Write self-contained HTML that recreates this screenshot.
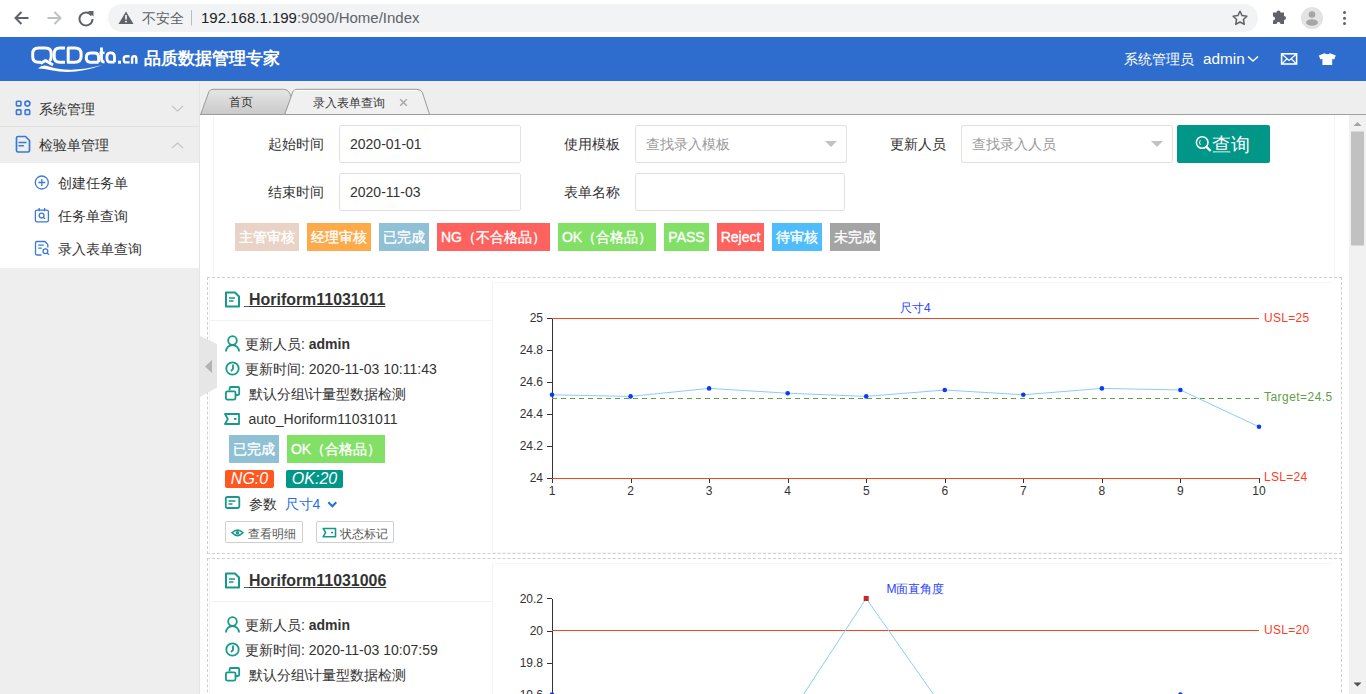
<!DOCTYPE html>
<html><head><meta charset="utf-8">
<style>
*{box-sizing:border-box}
html,body{margin:0;padding:0}
body{width:1366px;height:694px;overflow:hidden;position:relative;background:#fff;font-family:"Liberation Sans",sans-serif;color:#333;font-size:14px}
.a{position:absolute;white-space:nowrap}
#chrome{left:0;top:0;width:1366px;height:37px;background:#fff}
#pill{left:108px;top:4px;width:1150px;height:28px;border-radius:14px;background:#f1f3f4}
#header{left:0;top:37px;width:1366px;height:44px;background:#2e6dcd}
#sidebar{left:0;top:81px;width:200px;height:613px;background:#eeeeee;border-right:1px solid #e4e4e4}
#tabbar{left:200px;top:81px;width:1166px;height:34px;background:#eeeeee;border-bottom:1px solid #a0a0a0}
#content{left:200px;top:115px;width:1149px;height:579px;background:#fff}
#sb{left:1349px;top:115px;width:17px;height:579px;background:#f1f1f1}
.inp{border:1px solid #e2e2e2;border-radius:2px;background:#fff;height:38px}
.lbl{font-size:14px;color:#333}
.bdg{height:28px;line-height:28px;color:#fff;font-size:14px;text-align:center;-webkit-text-stroke:0.35px #fff}
.card{border:1px dashed #cfcfcf}
.ic{color:#1a9a8c}
.btn{border:1px solid #cfcfcf;border-radius:2px;height:22px;font-size:12px;color:#555;line-height:20px}
</style></head><body>
<div id="chrome" class="a"></div>
<div id="pill" class="a"></div>
<!-- nav icons -->
<svg class="a" style="left:0;top:0" width="440" height="37">
  <g fill="none" stroke="#5f6368" stroke-width="2">
    <path d="M28.5 18H15.5M21.5 12l-6 6 6 6"/>
  </g>
  <g fill="none" stroke="#bdc1c6" stroke-width="2">
    <path d="M47.5 18h13M54.5 12l6 6-6 6"/>
  </g>
  <g fill="none" stroke="#5f6368" stroke-width="2">
    <path d="M91.5 15.5A6.5 6.5 0 1 0 92.5 19"/>
  </g>
  <path d="M88 11h5.5v5.5z" fill="#5f6368"/>
  <path d="M126 11.5L133.5 24h-15z" fill="#5f6368"/>
  <rect x="125.2" y="15" width="1.6" height="4.5" fill="#fff"/>
  <rect x="125.2" y="20.8" width="1.6" height="1.6" fill="#fff"/>
  <rect x="191" y="10" width="1" height="15.5" fill="#bbb"/>
</svg>
<div class="a" style="left:142px;top:9px;font-size:14px;color:#5f6368;line-height:18px">不安全</div>
<div class="a" style="left:201px;top:8px;font-size:15px;color:#202124;line-height:20px">192.168.1.199<span style="color:#5f6368">:9090/Home/Index</span></div>
<svg class="a" style="left:1220px;top:0" width="146" height="37">
  <path d="M20 11.2l2.1 4.4 4.8.6-3.5 3.3.9 4.8-4.3-2.3-4.3 2.3.9-4.8-3.5-3.3 4.8-.6z" fill="none" stroke="#5f6368" stroke-width="1.5" stroke-linejoin="round"/>
  <path d="M53 12.5h3.5a2 2 0 0 1 4 0H64v3.5a2 2 0 0 1 0 4V24h-3.5a2 2 0 0 0-4 0H53v-3.5a2 2 0 0 0 0-4z" fill="#5f6368"/>
  <circle cx="92" cy="18" r="11" fill="#e3e3e3"/>
  <circle cx="92" cy="14.5" r="3.3" fill="#a6a6a6"/>
  <ellipse cx="92" cy="22.5" rx="6" ry="3.3" fill="#a6a6a6"/>
  <circle cx="124.5" cy="12.5" r="1.5" fill="#5f6368"/>
  <circle cx="124.5" cy="18.2" r="1.5" fill="#5f6368"/>
  <circle cx="124.5" cy="23.5" r="1.5" fill="#5f6368"/>
</svg>

<div id="header" class="a"></div>
<svg class="a" style="left:25px;top:40px" width="120" height="36" fill="none" stroke="#fff" stroke-width="3" stroke-linejoin="round">
<path d="M16 22.2H13.5Q7.7 22.2 7.7 16.5V13.8Q7.7 8.1 13.5 8.1H20.5Q26.2 8.1 26.2 13.8V16.5Q26.2 19.5 24.5 21"/>
<path d="M15.5 23.5L20.5 20.5L28 25"/>
<path d="M40 8.1H34.8Q29.2 8.1 29.2 13.5V16.8Q29.2 22.2 34.8 22.2H40"/>
<path d="M43.2 8.1H49.8Q56.1 8.1 56.1 14V16.3Q56.1 22.2 49.8 22.2H43.2Z"/>
<path d="M73.6 22.2V17Q73.6 12.9 69.5 12.9H65.5Q61.3 12.9 61.3 17.5Q61.3 22.2 65.5 22.2H73.6"/>
<path d="M76.5 7.5V18.5Q76.5 22.2 79.5 22.2" stroke-width="2.8"/><path d="M74.5 12.9H79.5" stroke-width="2.6"/>
<path d="M89.5 22.2V17Q89.5 12.9 86 12.9H85Q81.9 12.9 81.9 17.5Q81.9 22.2 85 22.2H89.5" stroke-width="2.8"/>
<rect x="93" y="20.7" width="3" height="3" fill="#fff" stroke="none"/>
<path d="M104.6 16.3H101.2Q98.8 16.3 98.8 18.8V19.9Q98.8 22.4 101.2 22.4H104.6" stroke-width="2.4"/>
<path d="M107.1 23.7V18.6Q107.1 16.3 109.1 16.3H109.4Q111.3 16.3 111.3 18.6V23.7" stroke-width="2.4"/>
<path d="M13 28.6Q17 24.5 21.5 25.8Q45 34 78 24.8Q50 35.5 26 30.2Q19 28.5 13 28.6Z" fill="#fff" stroke="none"/>
</svg>
<div class="a" style="left:144px;top:47.5px;font-size:16.7px;color:#fff;line-height:22px;font-weight:bold">品质数据管理专家</div>
<div class="a" style="left:1124px;top:49px;font-size:14px;color:#fff;line-height:20px">系统管理员</div>
<div class="a" style="left:1203px;top:49px;font-size:15.3px;color:#fff;line-height:20px">admin</div>
<svg class="a" style="left:1240px;top:40px" width="126" height="40">
  <path d="M8 16.5l5 4.5 5-4.5" fill="none" stroke="#fff" stroke-width="1.6"/>
  <rect x="41.6" y="13.8" width="15" height="10.2" fill="none" stroke="#fff" stroke-width="1.6"/>
  <path d="M42 14.2l7.1 6.2 7.1-6.2M42 23.6l4.8-4.6M56.2 23.6l-4.8-4.6" fill="none" stroke="#fff" stroke-width="1.2"/>
  <path d="M84.6 13.2L78.8 15.6 80.4 19.4 82.4 18.7V25H92.2V18.7L94.2 19.4 95.8 15.6 90 13.2Q87.3 15.2 84.6 13.2Z" fill="#fff"/>
</svg>

<div id="sidebar" class="a"></div>
<div class="a" style="left:0;top:126px;width:199px;height:1px;background:#e0e0e0"></div>
<div class="a" style="left:0;top:163px;width:199px;height:105px;background:#fff"></div>
<svg class="a" style="left:0;top:81px" width="199" height="190">
  <g fill="none" stroke="#3b78d8" stroke-width="1.8">
    <rect x="16.4" y="20.3" width="4.6" height="4.6" rx="0.8" stroke-width="1.6"/><circle cx="27.4" cy="22.6" r="2.5" stroke-width="1.6"/>
    <rect x="16.4" y="28.9" width="4.6" height="4.6" rx="0.8" stroke-width="1.6"/><rect x="25.1" y="28.9" width="4.6" height="4.6" rx="0.8" stroke-width="1.6"/>
    <path d="M18 55.5h7.5l4 4v10q0 1.5-1.5 1.5h-10q-1.5 0-1.5-1.5v-12.5q0-1.5 1.5-1.5z" stroke-width="1.7"/><path d="M18.5 61.5h8M18.5 64.8h5.3" stroke-width="1.6"/>
  </g>
  <g fill="none" stroke="#c4c4c4" stroke-width="1.2"><path d="M172 25l5.5 5 5.5-5"/><path d="M172 67l5.5-5 5.5 5"/></g>
  <g fill="none" stroke="#3b78d8" stroke-width="1.3">
    <circle cx="41.8" cy="101.5" r="6.5"/><path d="M41.8 98v7M38.3 101.5h7"/>
    <rect x="35.4" y="129.2" width="13" height="11.6" rx="1.6"/><path d="M39.2 127v3.2M44.6 127v3.2"/><circle cx="41.6" cy="134.6" r="2.4"/><path d="M43.3 136.3l1.6 1.6"/>
    <path d="M47.8 166.5V163.5l-3-3h-7.8q-1.5 0-1.5 1.5v10.5q0 1.5 1.5 1.5h4.5"/><path d="M38.3 164.2h5.5M38.3 167.2h3.5"/><circle cx="45.4" cy="170.2" r="2.4"/><path d="M47.1 171.9l1.8 1.8"/>
  </g>
</svg>
<div class="a lbl" style="left:39px;top:99px;line-height:20px">系统管理</div>
<div class="a lbl" style="left:39px;top:135px;line-height:20px">检验单管理</div>
<div class="a lbl" style="left:58px;top:173px;line-height:20px">创建任务单</div>
<div class="a lbl" style="left:58px;top:206px;line-height:20px">任务单查询</div>
<div class="a lbl" style="left:58px;top:239px;line-height:20px">录入表单查询</div>

<div id="tabbar" class="a"></div>
<svg class="a" style="left:196px;top:85px" width="240" height="31">
  <defs><linearGradient id="tg" x1="0" y1="0" x2="0" y2="1"><stop offset="0" stop-color="#e6e6e6"/><stop offset="1" stop-color="#c9c9c9"/></linearGradient></defs>
  <path d="M4.6 29.5L13 6.5Q14.3 4.3 17 4.3H87.5Q91.8 4.3 93.6 8L95.6 13L88.7 29.5Z" fill="url(#tg)" stroke="#9a9a9a" stroke-width="1"/>
  <path d="M88.7 29.5L96.8 6.8Q98 4.3 101 4.3H221Q225 4.3 226.4 7.5L233.6 29.5Z" fill="#f0f0f0" stroke="#9a9a9a" stroke-width="1"/><path d="M98.5 5.5H221" stroke="#fff" stroke-width="1"/>
</svg>
<div class="a" style="left:229px;top:94px;font-size:12px;color:#333;line-height:16px">首页</div>
<div class="a" style="left:313px;top:94.5px;font-size:12px;color:#333;line-height:16px">录入表单查询</div>
<svg class="a" style="left:399px;top:98px" width="10" height="10"><path d="M1.2 1.2l6.6 6.6M7.8 1.2l-6.6 6.6" stroke="#ababab" stroke-width="1.6"/></svg>

<div id="content" class="a"></div>
<div class="a" style="left:213px;top:115px;width:1px;height:161px;background:#f4f4f4"></div>
<div class="a" style="left:1334px;top:115px;width:1px;height:161px;background:#f4f4f4"></div>
<div id="sb" class="a"></div>
<svg class="a" style="left:1349px;top:115px" width="17" height="579">
  <path d="M4.5 11L8.5 7 12.5 11z" fill="#a3a3a3"/>
  <rect x="2" y="16.5" width="13" height="114" fill="#c1c1c1"/>
  <path d="M4.5 567.5L8.5 571.5 12.5 567.5z" fill="#505050"/>
</svg>

<!-- form -->
<div class="a lbl" style="left:268px;top:134px;line-height:20px">起始时间</div>
<div class="a inp" style="left:339px;top:125px;width:182px;"></div>
<div class="a" style="left:350px;top:134px;line-height:20px;font-size:14px;color:#333">2020-01-01</div>
<div class="a lbl" style="left:268px;top:182px;line-height:20px">结束时间</div>
<div class="a inp" style="left:339px;top:173px;width:182px;"></div>
<div class="a" style="left:350px;top:182px;line-height:20px;font-size:14px;color:#333">2020-11-03</div>

<div class="a lbl" style="left:564px;top:134px;line-height:20px">使用模板</div>
<div class="a inp" style="left:635px;top:125px;width:212px;"></div>
<div class="a" style="left:646px;top:134px;line-height:20px;font-size:14px;color:#999">查找录入模板</div>
<svg class="a" style="left:824px;top:140px" width="14" height="8"><path d="M1 1h12l-6 6z" fill="#c2c2c2"/></svg>
<div class="a lbl" style="left:564px;top:182px;line-height:20px">表单名称</div>
<div class="a inp" style="left:635px;top:173px;width:210px;"></div>

<div class="a lbl" style="left:890px;top:134px;line-height:20px">更新人员</div>
<div class="a inp" style="left:961px;top:125px;width:212px;"></div>
<div class="a" style="left:972px;top:134px;line-height:20px;font-size:14px;color:#999">查找录入人员</div>
<svg class="a" style="left:1150px;top:140px" width="14" height="8"><path d="M1 1h12l-6 6z" fill="#c2c2c2"/></svg>
<div class="a" style="left:1177px;top:125px;width:93px;height:38px;background:#009688;border-radius:2px"></div>
<svg class="a" style="left:1194px;top:134px" width="20" height="20"><circle cx="8.2" cy="8.5" r="5.8" fill="none" stroke="#fff" stroke-width="1.5"/><path d="M12.4 12.8l4.3 4.2" stroke="#fff" stroke-width="2.4"/><path d="M6.3 6.2q-1.6 2.3 0 4.6" fill="none" stroke="#fff" stroke-width="1"/></svg>
<div class="a" style="left:1212px;top:131.5px;font-size:18.5px;color:#fff;line-height:26px">查询</div>

<!-- legend badges -->
<div class="a bdg" style="left:235px;top:223px;width:64px;background:#e8d3c6">主管审核</div>
<div class="a bdg" style="left:307px;top:223px;width:64px;background:#fdaa4b">经理审核</div>
<div class="a bdg" style="left:379px;top:223px;width:50px;background:#90c0d6">已完成</div>
<div class="a bdg" style="left:437px;top:223px;width:113px;background:#fd625e">NG（不合格品）</div>
<div class="a bdg" style="left:558px;top:223px;width:98px;background:#83e066">OK（合格品）</div>
<div class="a bdg" style="left:664px;top:223px;width:45px;background:#83e066">PASS</div>
<div class="a bdg" style="left:717px;top:223px;width:47px;background:#fd625e">Reject</div>
<div class="a bdg" style="left:772px;top:223px;width:50px;background:#4fbcfb">待审核</div>
<div class="a bdg" style="left:830px;top:223px;width:50px;background:#a4a4a4">未完成</div>

<!-- card 1 -->
<div class="a card" style="left:207px;top:277px;width:1135px;height:277px"></div>
<div class="a card" style="left:207px;top:558px;width:1135px;height:200px"></div>
<div class="a" style="left:209px;top:278px;width:1px;height:274px;background:#f5f5f5"></div>
<div class="a" style="left:492px;top:282px;width:842px;height:271px;border:1px solid #f7f7f7;border-left-color:#f3f3f3;border-right-color:#fdfdfd;border-radius:2px"></div>
<div class="a" style="left:210px;top:320px;width:282px;height:1px;background:#f2f2f2"></div>
<svg class="a" style="left:224px;top:290.6px" width="18" height="18"><path d="M2 1.5h9l4 4V15.5h-13z" fill="none" stroke="#16998a" stroke-width="2" stroke-linejoin="round"/><path d="M5 7h6M5 10h4.5" stroke="#16998a" stroke-width="1.6"/></svg>
<div class="a" style="left:244px;top:306px;width:5px;height:1px;background:#3b5bdb"></div>
<div class="a" style="left:249px;top:291px;font-size:15.95px;font-weight:bold;color:#333;line-height:18px;text-decoration:underline;text-underline-offset:1px">Horiform11031011</div>
<svg class="a" style="left:222px;top:332.5px" width="22" height="150">
<g fill="none" stroke="#16998a" stroke-width="1.8">
<circle cx="10.5" cy="7.5" r="4.3"/><path d="M4 18.5a6.5 6.5 0 0 1 13 0"/>
<circle cx="10.5" cy="35.5" r="6.2"/><path d="M11 31.5v4.5l-2 2"/>
<rect x="3.9" y="58.4" width="9.6" height="8.2" rx="1.5"/><path d="M7.6 57.5v-2.3q0-1.2 1.2-1.2h7.2q1.2 0 1.2 1.2v5.6q0 1.2-1.2 1.2h-2.5"/>
</g>
<path d="M3 81h14v10h-14l2.8-5z" fill="none" stroke="#16998a" stroke-width="1.8" stroke-linejoin="round"/><rect x="12" y="85" width="2.5" height="1.8" fill="#16998a"/>
</svg>
<div class="a" style="left:245px;top:335px;font-size:14px;line-height:18px;color:#333">更新人员: <b>admin</b></div>
<div class="a" style="left:245px;top:360px;font-size:14px;line-height:18px;color:#333">更新时间: 2020-11-03 10:11:43</div>
<div class="a" style="left:248.5px;top:385px;font-size:14px;line-height:18px;color:#333">默认分组\计量型数据检测</div>
<div class="a" style="left:248.5px;top:410px;font-size:14px;line-height:18px;color:#333">auto_Horiform11031011</div>
<div class="a" style="left:229px;top:435px;width:50px;"></div>
<div class="a bdg" style="left:229px;top:435px;width:50px;background:#90c0d6">已完成</div>
<div class="a bdg" style="left:287px;top:435px;width:98px;background:#83e066">OK（合格品）</div>
<div class="a" style="left:225px;top:470px;width:49px;height:18px;background:#ff5722;border-radius:2px;color:#fff;font-style:italic;font-size:16px;line-height:18px;text-align:center">NG:0</div>
<div class="a" style="left:286px;top:470px;width:57px;height:18px;background:#009688;border-radius:2px;color:#fff;font-style:italic;font-size:16px;line-height:18px;text-align:center">OK:20</div>
<svg class="a" style="left:222px;top:492px" width="130" height="60">
<rect x="3.8" y="5" width="13.5" height="11" rx="1.5" fill="none" stroke="#16998a" stroke-width="1.8"/><path d="M6.5 9h7M6.5 12h4" stroke="#16998a" stroke-width="1.4"/>
<path d="M106.3 10.3l4 4 4-4" fill="none" stroke="#1e6fe0" stroke-width="2"/>
<path d="M10 40.8q5.5-5.5 11 0q-5.5 5.5-11 0z" fill="none" stroke="#16998a" stroke-width="1.6"/><circle cx="15.5" cy="40.8" r="1.7" fill="#16998a"/>
<path d="M101.2 36.5h12.3v8.2h-12.3l2.4-4.1z" fill="none" stroke="#16998a" stroke-width="1.6" stroke-linejoin="round"/><rect x="109" y="39.8" width="2" height="1.5" fill="#16998a"/>
</svg>
<div class="a" style="left:249px;top:494.5px;font-size:14px;line-height:18px;color:#333">参数</div>
<div class="a" style="left:284.5px;top:494.5px;font-size:14px;line-height:18px;color:#1e6fe0">尺寸4</div>
<div class="a" style="left:225px;top:521px;width:78px;height:22px;border:1px solid #cfcfcf;border-radius:2px"></div>
<div class="a" style="left:248px;top:525.5px;font-size:12.3px;line-height:16px;color:#555">查看明细</div>
<div class="a" style="left:316px;top:521px;width:78px;height:22px;border:1px solid #cfcfcf;border-radius:2px"></div>
<div class="a" style="left:339.5px;top:525.5px;font-size:12.3px;line-height:16px;color:#555">状态标记</div>
<div class="a" style="left:209px;top:559px;width:1px;height:274px;background:#f5f5f5"></div>
<div class="a" style="left:492px;top:563px;width:842px;height:271px;border:1px solid #f7f7f7;border-left-color:#f3f3f3;border-right-color:#fdfdfd;border-radius:2px"></div>
<div class="a" style="left:210px;top:601px;width:282px;height:1px;background:#f2f2f2"></div>
<svg class="a" style="left:224px;top:571.6px" width="18" height="18"><path d="M2 1.5h9l4 4V15.5h-13z" fill="none" stroke="#16998a" stroke-width="2" stroke-linejoin="round"/><path d="M5 7h6M5 10h4.5" stroke="#16998a" stroke-width="1.6"/></svg>
<div class="a" style="left:244px;top:587px;width:5px;height:1px;background:#3b5bdb"></div>
<div class="a" style="left:249px;top:572px;font-size:15.95px;font-weight:bold;color:#333;line-height:18px;text-decoration:underline;text-underline-offset:1px">Horiform11031006</div>
<svg class="a" style="left:222px;top:613.5px" width="22" height="80">
<g fill="none" stroke="#16998a" stroke-width="1.8">
<circle cx="10.5" cy="7.5" r="4.3"/><path d="M4 18.5a6.5 6.5 0 0 1 13 0"/>
<circle cx="10.5" cy="35.5" r="6.2"/><path d="M11 31.5v4.5l-2 2"/>
<rect x="3.9" y="58.4" width="9.6" height="8.2" rx="1.5"/><path d="M7.6 57.5v-2.3q0-1.2 1.2-1.2h7.2q1.2 0 1.2 1.2v5.6q0 1.2-1.2 1.2h-2.5"/>
</g>
<path d="M3 81h14v10h-14l2.8-5z" fill="none" stroke="#16998a" stroke-width="1.8" stroke-linejoin="round"/><rect x="12" y="85" width="2.5" height="1.8" fill="#16998a"/>
</svg>
<div class="a" style="left:245px;top:616px;font-size:14px;line-height:18px;color:#333">更新人员: <b>admin</b></div>
<div class="a" style="left:245px;top:641px;font-size:14px;line-height:18px;color:#333">更新时间: 2020-11-03 10:07:59</div>
<div class="a" style="left:248.5px;top:666px;font-size:14px;line-height:18px;color:#333">默认分组\计量型数据检测</div>
<svg class="a" style="left:200px;top:336px" width="17" height="62"><path d="M0 0L17 8V51.5L0 61z" fill="#e6e6e6"/><path d="M5 30.5L12 24V37z" fill="#b3b3b3"/></svg>
<svg class="a" style="left:0;top:0" width="1366" height="694" font-family="Liberation Sans, sans-serif"><g shape-rendering="crispEdges">
<line x1="552.5" y1="318" x2="552.5" y2="483" stroke="#333"/>
<line x1="547" y1="318.5" x2="552" y2="318.5" stroke="#333"/>
<line x1="547" y1="350.5" x2="552" y2="350.5" stroke="#333"/>
<line x1="547" y1="382.5" x2="552" y2="382.5" stroke="#333"/>
<line x1="547" y1="414.5" x2="552" y2="414.5" stroke="#333"/>
<line x1="547" y1="446.5" x2="552" y2="446.5" stroke="#333"/>
<line x1="547" y1="478.5" x2="552" y2="478.5" stroke="#333"/>
<line x1="552.5" y1="478" x2="552.5" y2="483" stroke="#333"/>
<line x1="631.5" y1="478" x2="631.5" y2="483" stroke="#333"/>
<line x1="709.5" y1="478" x2="709.5" y2="483" stroke="#333"/>
<line x1="788.5" y1="478" x2="788.5" y2="483" stroke="#333"/>
<line x1="866.5" y1="478" x2="866.5" y2="483" stroke="#333"/>
<line x1="945.5" y1="478" x2="945.5" y2="483" stroke="#333"/>
<line x1="1023.5" y1="478" x2="1023.5" y2="483" stroke="#333"/>
<line x1="1102.5" y1="478" x2="1102.5" y2="483" stroke="#333"/>
<line x1="1180.5" y1="478" x2="1180.5" y2="483" stroke="#333"/>
<line x1="1259.5" y1="478" x2="1259.5" y2="483" stroke="#333"/>
</g>
<text x="543" y="321.8" text-anchor="end" fill="#333" font-size="12">25</text>
<text x="543" y="353.8" text-anchor="end" fill="#333" font-size="12">24.8</text>
<text x="543" y="385.8" text-anchor="end" fill="#333" font-size="12">24.6</text>
<text x="543" y="417.8" text-anchor="end" fill="#333" font-size="12">24.4</text>
<text x="543" y="449.8" text-anchor="end" fill="#333" font-size="12">24.2</text>
<text x="543" y="481.8" text-anchor="end" fill="#333" font-size="12">24</text>
<text x="552.0" y="495" text-anchor="middle" fill="#333" font-size="12">1</text>
<text x="630.5555555555555" y="495" text-anchor="middle" fill="#333" font-size="12">2</text>
<text x="709.1111111111111" y="495" text-anchor="middle" fill="#333" font-size="12">3</text>
<text x="787.6666666666666" y="495" text-anchor="middle" fill="#333" font-size="12">4</text>
<text x="866.2222222222222" y="495" text-anchor="middle" fill="#333" font-size="12">5</text>
<text x="944.7777777777778" y="495" text-anchor="middle" fill="#333" font-size="12">6</text>
<text x="1023.3333333333333" y="495" text-anchor="middle" fill="#333" font-size="12">7</text>
<text x="1101.888888888889" y="495" text-anchor="middle" fill="#333" font-size="12">8</text>
<text x="1180.4444444444443" y="495" text-anchor="middle" fill="#333" font-size="12">9</text>
<text x="1259.0" y="495" text-anchor="middle" fill="#333" font-size="12">10</text>
<line x1="552" y1="318.5" x2="1259" y2="318.5" stroke="#f8431f" stroke-width="1.1"/>
<line x1="552" y1="478.5" x2="1259" y2="478.5" stroke="#f8431f" stroke-width="1.1"/>
<line x1="552" y1="398.5" x2="1259" y2="398.5" stroke="#5fa048" stroke-width="1" stroke-dasharray="5,4"/>
<text x="1264" y="321.5" fill="#ff3d1f" font-size="12" letter-spacing="0.3">USL=25</text>
<text x="1264" y="480.8" fill="#ff3d1f" font-size="12" letter-spacing="0.3">LSL=24</text>
<text x="1264" y="401" fill="#5fa048" font-size="12" letter-spacing="0.45">Target=24.5</text>
<polyline points="552.0,394.8 630.6,396.4 709.1,388.4 787.7,393.2 866.2,396.4 944.8,390.0 1023.3,394.8 1101.9,388.4 1180.4,390.0 1259.0,426.8" fill="none" stroke="#87cefa" stroke-width="1"/>
<circle cx="552.0" cy="394.8" r="2.3" fill="#0d3bf5"/>
<circle cx="630.6" cy="396.4" r="2.3" fill="#0d3bf5"/>
<circle cx="709.1" cy="388.4" r="2.3" fill="#0d3bf5"/>
<circle cx="787.7" cy="393.2" r="2.3" fill="#0d3bf5"/>
<circle cx="866.2" cy="396.4" r="2.3" fill="#0d3bf5"/>
<circle cx="944.8" cy="390.0" r="2.3" fill="#0d3bf5"/>
<circle cx="1023.3" cy="394.8" r="2.3" fill="#0d3bf5"/>
<circle cx="1101.9" cy="388.4" r="2.3" fill="#0d3bf5"/>
<circle cx="1180.4" cy="390.0" r="2.3" fill="#0d3bf5"/>
<circle cx="1259.0" cy="426.8" r="2.3" fill="#0d3bf5"/>
<text x="900" y="312" fill="#2a44ff" font-size="12">尺寸4</text><g shape-rendering="crispEdges">
<line x1="552.5" y1="599" x2="552.5" y2="694" stroke="#333"/>
<line x1="547" y1="598.5" x2="552" y2="598.5" stroke="#333"/>
<line x1="547" y1="631.5" x2="552" y2="631.5" stroke="#333"/>
<line x1="547" y1="663.5" x2="552" y2="663.5" stroke="#333"/>
<line x1="547" y1="695.5" x2="552" y2="695.5" stroke="#333"/>
</g>
<text x="543" y="602.8" text-anchor="end" fill="#333" font-size="12">20.2</text>
<text x="543" y="634.8" text-anchor="end" fill="#333" font-size="12">20</text>
<text x="543" y="666.8" text-anchor="end" fill="#333" font-size="12">19.8</text>
<text x="543" y="698.8" text-anchor="end" fill="#333" font-size="12">19.6</text>
<line x1="552" y1="630.5" x2="1259" y2="630.5" stroke="#f8431f" stroke-width="1.1"/>
<text x="1264" y="634" fill="#ff3d1f" font-size="12" letter-spacing="0.3">USL=20</text>
<polyline points="552.0,694.5 630.6,742.5 709.1,774.5 787.7,718.5 866.2,598.5 944.8,710.5 1023.3,758.5 1101.9,726.5 1180.4,694.5 1259.0,742.5" fill="none" stroke="#87cefa" stroke-width="1"/>
<rect x="863.7" y="596.0" width="5" height="5" fill="#c62828"/>
<circle cx="552.0" cy="694.5" r="2.3" fill="#0d3bf5"/>
<circle cx="1180.4" cy="694.5" r="2.3" fill="#0d3bf5"/>
<text x="886.5" y="593" fill="#2a44ff" font-size="12">M面直角度</text></svg>
</body></html>
